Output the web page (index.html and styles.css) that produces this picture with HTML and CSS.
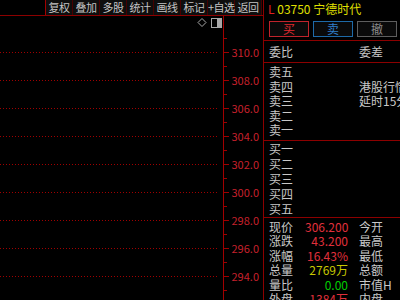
FILE: index.html
```html
<!DOCTYPE html>
<html lang="zh-CN">

<head>
    <meta charset="UTF-8">
    <meta name="viewport" content="width=device-width, initial-scale=1.0">
    <title>宁德时代 03750</title>
    <link rel="stylesheet" href="styles.css">
</head>

<body>
    <div class="terminal">
        <div class="chartSide">
            <div class="toolbar">
                <div class="tools">
                    <span class="tool">复权</span>
                    <span class="tool">叠加</span>
                    <span class="tool">多股</span>
                    <span class="tool">统计</span>
                    <span class="tool">画线</span>
                    <span class="tool">标记</span>
                    <span class="tool">+自选</span>
                    <span class="tool">返回</span>
                </div>
            </div>

            <svg class="chart" viewBox="0 16 263 284" width="263" height="284">
                <g class="grid-lines">
                    <line x1="0" y1="52.5" x2="219" y2="52.5" />
                    <line x1="0" y1="80.5" x2="219" y2="80.5" />
                    <line x1="0" y1="108.5" x2="219" y2="108.5" />
                    <line x1="0" y1="136.5" x2="219" y2="136.5" />
                    <line x1="0" y1="164.5" x2="219" y2="164.5" />
                    <line x1="0" y1="192.5" x2="219" y2="192.5" />
                    <line x1="0" y1="220.5" x2="219" y2="220.5" />
                    <line x1="0" y1="248.5" x2="219" y2="248.5" />
                    <line x1="0" y1="276.5" x2="219" y2="276.5" />
                </g>
                <g class="axis">
                    <line x1="223.5" y1="16" x2="223.5" y2="300" />
                    <line x1="224" y1="52.5" x2="229" y2="52.5" />
                    <line x1="224" y1="80.5" x2="229" y2="80.5" />
                    <line x1="224" y1="108.5" x2="229" y2="108.5" />
                    <line x1="224" y1="136.5" x2="229" y2="136.5" />
                    <line x1="224" y1="164.5" x2="229" y2="164.5" />
                    <line x1="224" y1="192.5" x2="229" y2="192.5" />
                    <line x1="224" y1="220.5" x2="229" y2="220.5" />
                    <line x1="224" y1="248.5" x2="229" y2="248.5" />
                    <line x1="224" y1="276.5" x2="229" y2="276.5" />
                    <line x1="224" y1="38.5" x2="227" y2="38.5" />
                    <line x1="224" y1="66.5" x2="227" y2="66.5" />
                    <line x1="224" y1="94.5" x2="227" y2="94.5" />
                    <line x1="224" y1="122.5" x2="227" y2="122.5" />
                    <line x1="224" y1="150.5" x2="227" y2="150.5" />
                    <line x1="224" y1="178.5" x2="227" y2="178.5" />
                    <line x1="224" y1="206.5" x2="227" y2="206.5" />
                    <line x1="224" y1="234.5" x2="227" y2="234.5" />
                    <line x1="224" y1="262.5" x2="227" y2="262.5" />
                    <line x1="224" y1="290.5" x2="227" y2="290.5" />
                </g>
                <g class="axis-labels">
                    <text x="259" y="56.5">310.0</text>
                    <text x="259" y="84.5">308.0</text>
                    <text x="259" y="112.5">306.0</text>
                    <text x="259" y="140.5">304.0</text>
                    <text x="259" y="168.5">302.0</text>
                    <text x="259" y="196.5">300.0</text>
                    <text x="259" y="224.5">298.0</text>
                    <text x="259" y="252.5">296.0</text>
                    <text x="259" y="280.5">294.0</text>
                </g>
                <!-- corner icons -->
                <polygon class="icon-line" points="202,18.5 206,22.5 202,26.5 198,22.5" />
                <rect class="icon-line" x="211.5" y="18.5" width="10" height="9" />
                <rect class="icon-fill" x="217" y="19" width="4" height="8" />
            </svg>
        </div>

        <div class="quote">
            <div class="quoteHead">
                <div class="title"><span class="market">L</span> <span class="code">03750 宁德时代</span></div>
                <div class="tradeBtns">
                    <span class="btn buyBtn">买</span>
                    <span class="btn sellBtn">卖</span>
                    <span class="btn cancelBtn">撤</span>
                </div>
            </div>

            <div class="rows ratio">
                <span>委比</span><span></span><span class="side">委差</span>
            </div>

            <div class="rows book sell">
                <span>卖五</span><span></span><span></span>
                <span>卖四</span><span></span><span class="side">港股行情</span>
                <span>卖三</span><span></span><span class="side">延时15分</span>
                <span>卖二</span><span></span><span></span>
                <span>卖一</span><span></span><span></span>
            </div>

            <div class="rows book buy">
                <span>买一</span><span></span><span></span>
                <span>买二</span><span></span><span></span>
                <span>买三</span><span></span><span></span>
                <span>买四</span><span></span><span></span>
                <span>买五</span><span></span><span></span>
            </div>

            <div class="rows stats">
                <span>现价</span><span class="val up">306.200</span><span class="side">今开</span>
                <span>涨跌</span><span class="val up">43.200</span><span class="side">最高</span>
                <span>涨幅</span><span class="val up">16.43%</span><span class="side">最低</span>
                <span>总量</span><span class="val vol">2769万</span><span class="side">总额</span>
                <span>量比</span><span class="val flat">0.00</span><span class="side">市值H</span>
                <span>外盘</span><span class="val up">1384万</span><span class="side">内盘</span>
            </div>
        </div>
    </div>
</body>

</html>
```

FILE: styles.css
```css
body {
    margin: 0;
    background-color: #000000;
    font-family: "Noto Sans CJK SC", "Noto Sans", sans-serif;
    overflow: hidden;
}

.terminal {
    display: grid;
    grid-template-columns: 263px 137px;
    height: 300px;
    overflow: hidden;
}

/* left: toolbar + price chart */

.chartSide {
    display: flex;
    flex-direction: column;
}

.toolbar {
    height: 15px;
    border-bottom: 1px solid #8c0000;
    padding-left: 45px;
    display: flex;
}

.tools {
    display: flex;
    border-left: 1px solid #a00000;
}

.tool {
    width: 26px;
    border-right: 1px solid #460000;
    background: #0e0e0e;
    color: #c4c4c4;
    font-size: 11px;
    line-height: 15px;
    text-align: center;
    white-space: nowrap;
    letter-spacing: -0.5px;
}

.chart {
    display: block;
}

.grid-lines line {
    stroke: #a00000;
    stroke-width: 1;
    stroke-dasharray: 1 2;
}

.axis line {
    stroke: #a00000;
    stroke-width: 1;
}

.axis-labels text {
    fill: #c8202c;
    font-size: 11px;
    text-anchor: end;
    font-family: "Noto Sans CJK SC", sans-serif;
}

.icon-line {
    fill: none;
    stroke: #a8a8a8;
    stroke-width: 1;
}

.icon-fill {
    fill: #a8a8a8;
}

/* right: quote panel */

.quote {
    border-left: 1px solid #8c0000;
    overflow: hidden;
    font-size: 12px;
    color: #c8c8c8;
}

.quoteHead {
    box-sizing: border-box;
    height: 41px;
    border-bottom: 1px solid #8c0000;
}

.title {
    height: 18px;
    line-height: 18px;
    padding-left: 4px;
    white-space: nowrap;
}

.market {
    color: #e02020;
}

.code {
    color: #e0e000;
}

.tradeBtns {
    display: flex;
    gap: 4px;
    margin-top: 3px;
    padding-left: 5px;
}

.btn {
    box-sizing: border-box;
    width: 40px;
    height: 16px;
    line-height: 14px;
    text-align: center;
    background: #0a0a0a;
}

.buyBtn {
    border: 1px solid #c0242c;
    color: #e02a30;
}

.sellBtn {
    border: 1px solid #1e6aa8;
    color: #2f7fc8;
}

.cancelBtn {
    border: 1px solid #5e5e5e;
    color: #8c8c8c;
}

.rows {
    box-sizing: border-box;
    display: grid;
    grid-template-columns: 36px 43px 1fr;
    padding-left: 5px;
    white-space: nowrap;
}

.rows .side {
    padding-left: 11px;
}

.ratio {
    height: 22px;
    padding-top: 1px;
    line-height: 20px;
    border-bottom: 1px solid #8c0000;
}

.sell {
    height: 78px;
    padding-top: 2px;
    grid-auto-rows: 14.5px;
    line-height: 14.5px;
    border-bottom: 1px solid #8c0000;
}

.buy {
    height: 77px;
    grid-auto-rows: 15px;
    line-height: 15px;
    border-bottom: 1px solid #8c0000;
}

.stats {
    padding-top: 1.5px;
    grid-auto-rows: 14.6px;
    line-height: 14.6px;
}

.val {
    text-align: right;
}

.up {
    color: #e0303c;
}

.vol {
    color: #c8c800;
}

.flat {
    color: #00cc00;
}
```
